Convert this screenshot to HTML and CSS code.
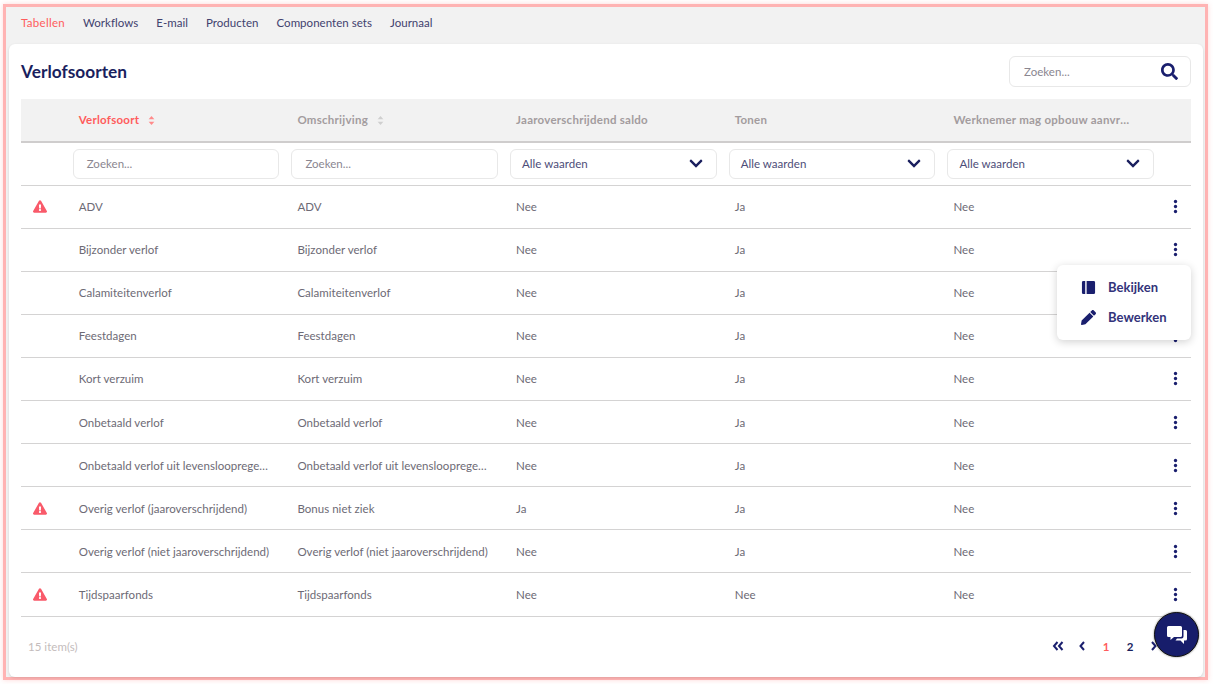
FILE: index.html
```html
<!DOCTYPE html>
<html lang="nl">
<head>
    <meta charset="UTF-8">
    <title>Verlofsoorten</title>
    <link rel="stylesheet" href="styles.css">
</head>
<body>
    <svg class="sprites" width="0" height="0">
        <symbol id="i-warn" viewBox="0 0 576 512"><path d="M569.517 440.013C587.975 472.007 564.806 512 527.94 512H48.054c-36.937 0-59.999-40.055-41.577-71.987L246.423 24c18.467-32.009 64.72-31.951 83.154 0l239.94 416.013zM288 354c-25.405 0-46 20.595-46 46s20.595 46 46 46 46-20.595 46-46-20.595-46-46-46zm-43.673-165.346l7.418 136c.347 6.364 5.609 11.346 11.982 11.346h48.546c6.373 0 11.635-4.982 11.982-11.346l7.418-136c.375-6.874-5.098-12.654-11.982-12.654h-63.383c-6.884 0-12.356 5.78-11.981 12.654z"/></symbol>
        <symbol id="i-kebab" viewBox="0 0 6 18"><circle cx="3" cy="3" r="2"/><circle cx="3" cy="9" r="2"/><circle cx="3" cy="15" r="2"/></symbol>
        <symbol id="i-chevron" viewBox="0 0 448 512"><path d="M207.029 381.476L12.686 187.132c-9.373-9.373-9.373-24.569 0-33.941l22.667-22.667c9.357-9.357 24.522-9.375 33.901-.04L224 284.505l154.745-154.021c9.379-9.335 24.544-9.317 33.901.04l22.667 22.667c9.373 9.373 9.373 24.569 0 33.941L240.971 381.476c-9.373 9.372-24.569 9.372-33.942 0z"/></symbol>
        <symbol id="i-sort" viewBox="0 0 8 11"><path d="M4 0l3.500 4h-7z"/><path d="M4 11L.5 7h7z"/></symbol>
    </svg>

    <div class="frame">
        <nav class="tabs">
            <a class="tab active">Tabellen</a>
            <a class="tab">Workflows</a>
            <a class="tab">E-mail</a>
            <a class="tab">Producten</a>
            <a class="tab">Componenten sets</a>
            <a class="tab">Journaal</a>
        </nav>

        <main class="card">
            <div class="card-head">
                <h1>Verlofsoorten</h1>
                <div class="search">
                    <span>Zoeken...</span>
                    <svg class="search-icon" viewBox="0 0 512 512"><path d="M505 442.7L405.3 343c-4.5-4.5-10.6-7-17-7H372c27.6-35.3 44-79.7 44-128C416 93.1 322.9 0 208 0S0 93.1 0 208s93.1 208 208 208c48.3 0 92.7-16.4 128-44v16.3c0 6.4 2.5 12.5 7 17l99.7 99.7c9.4 9.4 24.6 9.4 33.9 0l28.3-28.3c9.4-9.4 9.4-24.6.1-34zM208 336c-70.7 0-128-57.2-128-128 0-70.7 57.2-128 128-128 70.7 0 128 57.2 128 128 0 70.7-57.2 128-128 128z"/></svg>
                </div>
            </div>

            <table class="grid">
                <colgroup>
                    <col class="col-icon">
                    <col class="col-data"><col class="col-data"><col class="col-data"><col class="col-data"><col class="col-data">
                    <col>
                </colgroup>
                <thead>
                    <tr class="head-row">
                        <th></th>
                        <th class="sorted">Verlofsoort <svg class="sort"><use href="#i-sort"/></svg></th>
                        <th>Omschrijving <svg class="sort"><use href="#i-sort"/></svg></th>
                        <th>Jaaroverschrijdend saldo</th>
                        <th>Tonen</th>
                        <th>Werknemer mag opbouw aanvragen</th>
                        <th></th>
                    </tr>
                    <tr class="filter-row">
                        <td></td>
                        <td><div class="field">Zoeken...</div></td>
                        <td><div class="field">Zoeken...</div></td>
                        <td><div class="field select">Alle waarden <svg class="chev"><use href="#i-chevron"/></svg></div></td>
                        <td><div class="field select">Alle waarden <svg class="chev"><use href="#i-chevron"/></svg></div></td>
                        <td><div class="field select">Alle waarden <svg class="chev"><use href="#i-chevron"/></svg></div></td>
                        <td></td>
                    </tr>
                </thead>
                <tbody>
                    <tr><td class="ic"><svg class="warn"><use href="#i-warn"/></svg></td><td>ADV</td><td>ADV</td><td>Nee</td><td>Ja</td><td>Nee</td><td class="ic"><svg class="kebab"><use href="#i-kebab"/></svg></td></tr>
                    <tr><td></td><td>Bijzonder verlof</td><td>Bijzonder verlof</td><td>Nee</td><td>Ja</td><td>Nee</td><td class="ic"><svg class="kebab"><use href="#i-kebab"/></svg></td></tr>
                    <tr><td></td><td>Calamiteitenverlof</td><td>Calamiteitenverlof</td><td>Nee</td><td>Ja</td><td>Nee</td><td class="ic"><svg class="kebab"><use href="#i-kebab"/></svg></td></tr>
                    <tr><td></td><td>Feestdagen</td><td>Feestdagen</td><td>Nee</td><td>Ja</td><td>Nee</td><td class="ic"><svg class="kebab"><use href="#i-kebab"/></svg></td></tr>
                    <tr><td></td><td>Kort verzuim</td><td>Kort verzuim</td><td>Nee</td><td>Ja</td><td>Nee</td><td class="ic"><svg class="kebab"><use href="#i-kebab"/></svg></td></tr>
                    <tr><td></td><td>Onbetaald verlof</td><td>Onbetaald verlof</td><td>Nee</td><td>Ja</td><td>Nee</td><td class="ic"><svg class="kebab"><use href="#i-kebab"/></svg></td></tr>
                    <tr><td></td><td>Onbetaald verlof uit levensloopregeling</td><td>Onbetaald verlof uit levensloopregeling</td><td>Nee</td><td>Ja</td><td>Nee</td><td class="ic"><svg class="kebab"><use href="#i-kebab"/></svg></td></tr>
                    <tr><td class="ic"><svg class="warn"><use href="#i-warn"/></svg></td><td>Overig verlof (jaaroverschrijdend)</td><td>Bonus niet ziek</td><td>Ja</td><td>Ja</td><td>Nee</td><td class="ic"><svg class="kebab"><use href="#i-kebab"/></svg></td></tr>
                    <tr><td></td><td>Overig verlof (niet jaaroverschrijdend)</td><td>Overig verlof (niet jaaroverschrijdend)</td><td>Nee</td><td>Ja</td><td>Nee</td><td class="ic"><svg class="kebab"><use href="#i-kebab"/></svg></td></tr>
                    <tr><td class="ic"><svg class="warn"><use href="#i-warn"/></svg></td><td>Tijdspaarfonds</td><td>Tijdspaarfonds</td><td>Nee</td><td>Nee</td><td>Nee</td><td class="ic"><svg class="kebab"><use href="#i-kebab"/></svg></td></tr>
                </tbody>
            </table>

            <div class="table-foot">
                <span class="count">15 item(s)</span>
                <div class="pager">
                    <span class="page"><svg class="arrow" viewBox="0 0 12 10"><path d="M5.500 1L2 5l3.500 4M10.500 1L7 5l3.500 4"/></svg></span>
                    <span class="page"><svg class="arrow" viewBox="0 0 12 10"><path d="M8 1L4.500 5 8 9"/></svg></span>
                    <span class="page current">1</span>
                    <span class="page">2</span>
                    <span class="page"><svg class="arrow" viewBox="0 0 12 10"><path d="M4 1l3.500 4L4 9"/></svg></span>
                    <span class="page"><svg class="arrow" viewBox="0 0 12 10"><path d="M1.500 1L5 5 1.500 9M6.500 1L10 5 6.500 9"/></svg></span>
                </div>
            </div>

            <div class="popup">
                <div class="popup-item">
                    <svg class="popup-icon" viewBox="0 0 16 16"><path d="M2.500 1H4.500V15H2.500A1.500 1.500 0 0 1 1 13.500V2.500A1.500 1.500 0 0 1 2.500 1zM6 1H13.500A1.500 1.500 0 0 1 15 2.500V13.500A1.500 1.500 0 0 1 13.500 15H6z"/></svg>
                    Bekijken
                </div>
                <div class="popup-item">
                    <svg class="popup-icon" viewBox="0 0 512 512"><path d="M497.900 142.100l-46.100 46.100c-4.700 4.700-12.300 4.700-17 0l-111-111c-4.700-4.700-4.700-12.300 0-17l46.100-46.100c18.700-18.700 49.100-18.700 67.900 0l60.100 60.100c18.800 18.700 18.800 49.100 0 67.900zM284.200 99.800L21.600 362.400.4 483.900c-2.900 16.400 11.400 30.600 27.800 27.800l121.500-21.300 262.600-262.600c4.700-4.700 4.700-12.300 0-17l-111-111c-4.800-4.700-12.400-4.700-17.100 0z"/></svg>
                    Bewerken
                </div>
            </div>
        </main>

        <button class="chat">
            <svg viewBox="0 0 20 18"><path d="M1.500 0H13.500A1.500 1.500 0 0 1 15 1.500V9.500A1.500 1.500 0 0 1 13.500 11H7L3.500 14V11H1.500A1.500 1.500 0 0 1 0 9.500V1.500A1.500 1.500 0 0 1 1.500 0z"/><path d="M16.500 4H18.500A1.500 1.500 0 0 1 20 5.500V13A1.500 1.500 0 0 1 18.500 14.500H17V18L13.500 14.500H8.500L10 12.500H14.500A2 2 0 0 0 16.500 10.500z"/></svg>
        </button>
    </div>
</body>
</html>
```

FILE: styles.css
```css
* {
    box-sizing: border-box;
}
html, body {
    height: 100%;
}
body {
    margin: 0;
    padding: 4px 5px 4px 3px;
    background-color: #fff;
    font-family: Lato, "Noto Sans", sans-serif;
    font-size: 11.5px;
    letter-spacing: 0.03px;
    color: #6d6a75;
}
.sprites {
    position: absolute;
}
.frame {
    position: relative;
    height: 100%;
    display: flex;
    flex-direction: column;
    background-color: #f2f2f2;
    border: 3px solid #ffb3b3;
    box-shadow: 0 0 5px rgba(255,179,179,0.5);
}
.tabs {
    height: 37px;
    flex: none;
    display: flex;
    align-items: center;
    gap: 18px;
    padding: 0 15px 6px;
    font-size: 11.5px;
}
.tab {
    color: #41416e;
}
.tab.active {
    color: #ff5c5c;
    letter-spacing: 0.3px;
}
.card {
    position: relative;
    flex: 1;
    margin: 0 2px 2px 3px;
    padding: 0 12px;
    background-color: #fff;
    border-radius: 6px;
    box-shadow: 0 1px 3px rgba(0,0,0,0.12);
}
.card-head {
    height: 55px;
    display: flex;
    align-items: center;
    justify-content: space-between;
    padding-bottom: 1px;
}
h1 {
    margin: 0;
    font-size: 17.3px;
    font-weight: 700;
    color: #1a1f5e;
}
.search {
    width: 182px;
    height: 31px;
    display: flex;
    align-items: center;
    justify-content: space-between;
    padding: 0 12px 0 14px;
    border: 1px solid #e8e8e8;
    border-radius: 6px;
    color: #8a8690;
}
.search-icon {
    width: 17px;
    height: 17px;
    fill: #1a1f6e;
}
.grid {
    width: 1170px;
    table-layout: fixed;
    border-collapse: collapse;
}
.col-icon {
    width: 45.7px;
}
.col-data {
    width: 218.7px;
}
.head-row {
    height: 43px;
    background-color: #f2f2f2;
    border-bottom: 2px solid #cfcdcd;
}
th {
    padding: 0 30px 2px 12px;
    text-align: left;
    font-weight: 700;
    letter-spacing: 0.25px;
    color: #a39c9e;
    white-space: nowrap;
    overflow: hidden;
    text-overflow: ellipsis;
}
th.sorted {
    color: #ff5c5c;
}
.sort {
    width: 7px;
    height: 9px;
    margin-left: 6px;
    vertical-align: -1px;
    fill: #cfcfcf;
}
.sorted .sort {
    fill: #ff8a8a;
}
.filter-row {
    height: 43px;
}
.filter-row td {
    padding: 0 6px;
}
.field {
    height: 30px;
    display: flex;
    align-items: center;
    justify-content: space-between;
    padding: 0 13px;
    border: 1px solid #e8e8e8;
    border-radius: 6px;
    color: #8a8690;
}
.field.select {
    padding: 0 13px 0 11px;
    color: #4d4d78;
}
.chev {
    width: 14px;
    height: 15px;
    fill: #1a1f5e;
}
td {
    padding: 0 15px 0 12px;
    white-space: nowrap;
    overflow: hidden;
    text-overflow: ellipsis;
}
tr {
    border-bottom: 1px solid #d4d3d3;
}
tbody tr {
    height: 43.12px;
}
td.ic {
    padding: 0;
    text-align: center;
    overflow: visible;
}
.warn {
    display: block;
    width: 14px;
    height: 13px;
    margin: 0 auto 0 12px;
    fill: #f95a6a;
}
.kebab {
    display: block;
    width: 5px;
    height: 15px;
    margin: 0 auto;
    fill: #1a1f6e;
}
.table-foot {
    height: 60px;
    display: flex;
    align-items: center;
    justify-content: space-between;
    padding-left: 7px;
}
.count {
    color: #c4bcbc;
}
.pager {
    display: flex;
    margin-right: 1px;
}
.page {
    width: 24px;
    text-align: center;
    font-weight: 700;
    color: #1a1f5e;
}
.page.current {
    color: #ff5c5c;
}
.arrow {
    width: 12px;
    height: 10px;
    fill: none;
    stroke: #1a1f6e;
    stroke-width: 2;
}
.popup {
    position: absolute;
    top: 221px;
    right: 12px;
    width: 134px;
    height: 75px;
    padding: 7px 0;
    background-color: #fff;
    border-radius: 6px;
    box-shadow: 0 2px 8px rgba(0,0,0,0.18);
}
.popup-item {
    height: 30px;
    display: flex;
    align-items: center;
    gap: 12px;
    padding-left: 24px;
    font-weight: 700;
    font-size: 13px;
    color: #33337a;
}
.popup-icon {
    width: 15px;
    height: 15px;
    fill: #1a1f6e;
}
.chat {
    position: absolute;
    top: 605px;
    left: 1148px;
    width: 45px;
    height: 45px;
    display: flex;
    align-items: center;
    justify-content: center;
    padding: 0;
    background-color: #171d6b;
    border: 1px solid #111;
    border-radius: 50%;
    box-shadow: 0 0 2px rgba(0,0,0,0.6);
}
.chat svg {
    width: 20px;
    height: 18px;
    fill: #fff;
}
```
